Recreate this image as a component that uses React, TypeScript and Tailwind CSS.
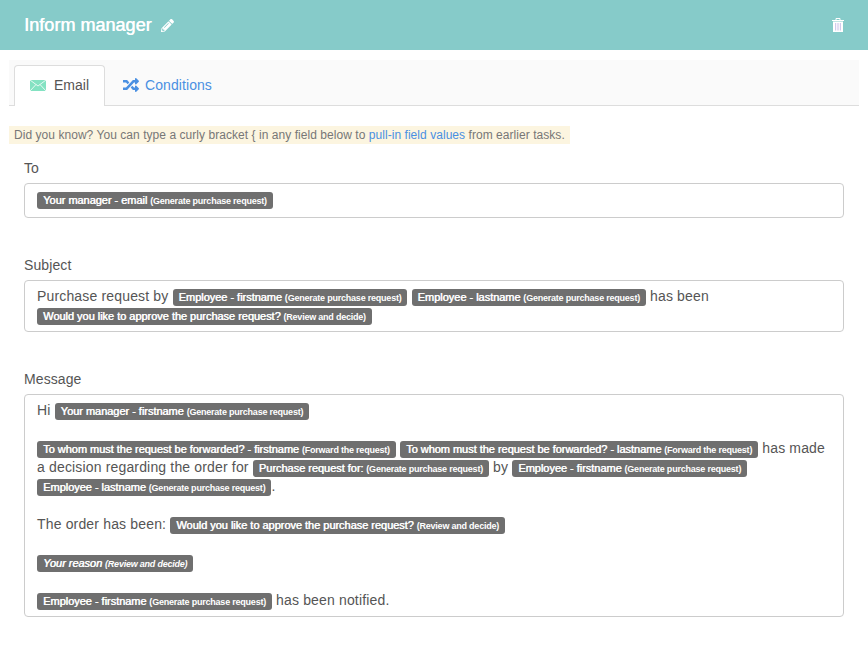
import { FaPencilAlt, FaRandom } from "react-icons/fa"

function Chip({ label, source, italic }: { label: string; source: string; italic?: boolean }) {
  return (
    <span className={"inline-block h-[17px] rounded-[3px] bg-[#6f6f6f] px-[6px] align-middle text-[11px] leading-[17px] tracking-[-0.03px] text-white whitespace-nowrap [text-shadow:0.5px_0_0_#fff] " + (italic ? "italic" : "")}>
      {label} <span className="text-[9px] font-bold tracking-[-0.22px] [text-shadow:none]">({source})</span>
    </span>
  )
}

function Field({ label, children, extra }: { label: string; children: React.ReactNode; extra?: string }) {
  return (
    <div className="mx-[24px]">
      <p className="mb-[5px] h-[20px] leading-[20px] text-[#555] tracking-[0.1px]">{label}</p>
      <div className={"rounded-[4px] border border-[#ccc] bg-white px-[12px] pt-[6px] leading-[19px] text-[#555] tracking-[0.16px] " + (extra || "pb-[6px]")}>
        {children}
      </div>
    </div>
  )
}

export default function App() {
  return (
    <div className="h-[647px] w-[868px] overflow-hidden bg-white text-[14px] font-['Liberation_Sans',Arial,sans-serif]">
      {/* Header */}
      <div className="flex h-[50px] items-center justify-between bg-[#86cbc9] pl-[24px] pr-[24px]">
        <div className="flex items-center gap-[10px]">
          <h1 className="text-[18px] text-white tracking-[0.03px] [text-shadow:0.5px_0_0_#fff]">Inform manager</h1>
          <FaPencilAlt size={13} className="text-white" />
        </div>
        <svg width="12" height="14" viewBox="0 0 12 14">
          <path d="M4 2V.5h4V2" fill="none" stroke="#fff" />
          <path d="M0 2h12v1H0z" fill="#fff" />
          <path d="M1 3.5h10V14H1z" fill="#fff" />
          <path d="M3 5h1.2v7.5H3zM5.4 5h1.2v7.5H5.4zM7.8 5H9v7.5H7.8z" fill="#d3c9ec" />
        </svg>
      </div>

      {/* Tabs */}
      <div className="mx-[9px] mt-[10px] flex h-[46px] items-end border-b border-[#ddd] bg-[#fafafa] pl-[5px]">
        <div className="-mb-px flex h-[41px] w-[91px] items-center gap-[8px] rounded-t-[4px] border border-b-0 border-[#ddd] bg-white pb-[2px] pl-[15px] text-[#555]">
          <svg width="16" height="11" viewBox="0 0 16 11">
            <rect width="16" height="11" fill="#84e2c2" />
            <path d="M0 0l8 6 8-6M0 11l6-6.5M16 11l-6-6.5" fill="none" stroke="#fff" strokeWidth="0.8" />
          </svg>
          Email
        </div>
        <div className="flex h-[40px] items-center gap-[6px] pl-[18px] text-[#4a90e2] tracking-[0.08px]">
          <FaRandom size={16} />
          Conditions
        </div>
      </div>

      {/* Hint */}
      <p className="mx-[9px] mt-[20px] w-fit bg-[#fcf5e0] px-[5px] text-[12px] leading-[18px] text-[#777] tracking-[0.048px]">
        Did you know? You can type a curly bracket {"{"} in any field below to <span className="text-[#4a90e2]">pull-in field values</span> from earlier tasks.
      </p>

      <div className="mt-[14px] flex flex-col">
        <Field label="To" extra="pb-[8px]">
          <Chip label="Your manager - email" source="Generate purchase request" />
        </Field>

        <div className="mt-[37px]">
          <Field label="Subject">
            Purchase request by <Chip label="Employee - firstname" source="Generate purchase request" /> <Chip label="Employee - lastname" source="Generate purchase request" /> has been <Chip label="Would you like to approve the purchase request?" source="Review and decide" />
          </Field>
        </div>

        <div className="mt-[37px]">
          <Field label="Message">
            <div>Hi <Chip label="Your manager - firstname" source="Generate purchase request" /></div>
            <div className="h-[19px]" />
            <div>
              <Chip label="To whom must the request be forwarded? - firstname" source="Forward the request" /> <Chip label="To whom must the request be forwarded? - lastname" source="Forward the request" /> <span>has made</span> <span>a decision regarding the order for</span> <Chip label="Purchase request for:" source="Generate purchase request" /> by <Chip label="Employee - firstname" source="Generate purchase request" /> <Chip label="Employee - lastname" source="Generate purchase request" />.
            </div>
            <div className="h-[19px]" />
            <div>The order has been: <Chip label="Would you like to approve the purchase request?" source="Review and decide" /></div>
            <div className="h-[19px]" />
            <div><Chip label="Your reason" source="Review and decide" italic /></div>
            <div className="h-[19px]" />
            <div><Chip label="Employee - firstname" source="Generate purchase request" /> has been notified.</div>
          </Field>
        </div>
      </div>
    </div>
  )
}
